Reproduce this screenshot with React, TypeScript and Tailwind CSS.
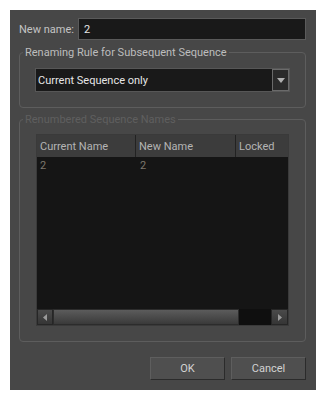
import React from "react";

const font = { fontFamily: 'Roboto, "Liberation Sans", Arial, sans-serif' };

export default function App() {
  return (
    <div className="w-[328px] h-[402px] bg-white pt-[10px] pl-[10px]" style={font}>
      <div className="w-[306px] h-[380px] bg-[#474747] flex flex-col text-[11px] leading-none whitespace-nowrap">
        {/* New name row */}
        <div className="flex items-center mt-[8px] ml-[9px] mr-[10px] h-[22px]">
          <span className="text-[#c4c4c4] w-[59px] shrink-0">New name:</span>
          <div className="flex-1 h-[22px] bg-[#191919] border border-[#5a5a5a] flex items-center pl-[5px] text-[#e6e6e6]">
            2
          </div>
        </div>

        {/* Group 1 */}
        <div className="relative mt-[12px] ml-[9px] mr-[10px] h-[56px] border border-[#5d5d5d] rounded-[4px] px-[15px] pt-[15px]">
          <span className="absolute left-[3px] top-[-7px] bg-[#474747] px-[2px] text-[#bdbdbd] leading-[14px]">
            Renaming Rule for Subsequent Sequence
          </span>
          <div className="flex h-[24px] border border-[#575757] bg-[#191919]">
            <div className="flex-1 flex items-center pl-[2px] text-[#e6e6e6]">Current Sequence only</div>
            <div className="w-[17px] h-full border border-[#6a6a6a] bg-[#2a2a2a] flex items-center justify-center">
              <svg width="8" height="5" viewBox="0 0 8 5">
                <polygon points="0,0 8,0 4,5" fill="#b0b0b0" />
              </svg>
            </div>
          </div>
        </div>

        {/* Group 2 */}
        <div className="relative mt-[11px] ml-[9px] mr-[10px] h-[223px] border border-[#5d5d5d] rounded-[4px] px-[16px] pt-[14px]">
          <span className="absolute left-[3px] top-[-7px] bg-[#474747] px-[2px] text-[#5f5f5f] leading-[14px]">
            Renumbered Sequence Names
          </span>
          <div className="flex flex-col h-[192px] bg-[#151515] border border-[#3a3a3a]">
            <div className="flex h-[22px] bg-[#3c3c3c] text-[#b4b4b4]">
              <div className="w-[99px] flex items-center pl-[3px] border-r border-[#222]">Current Name</div>
              <div className="w-[100px] flex items-center pl-[3px] border-r border-[#222]">New Name</div>
              <div className="flex-1 flex items-center pl-[3px]">Locked</div>
            </div>
            <div className="flex h-[16px] text-[#7e776c] items-center">
              <div className="w-[99px] pl-[3px]">2</div>
              <div className="w-[100px] pl-[4px]">2</div>
            </div>
            <div className="flex-1" />
            <div className="flex h-[16px] bg-[#2a2a2a]">
              <div className="w-[16px] h-full bg-gradient-to-b from-[#4a4a4a] to-[#353535] border border-[#262626] flex items-center justify-center">
                <svg width="4" height="7" viewBox="0 0 4 7">
                  <polygon points="4,0 4,7 0,3.5" fill="#9a9a9a" />
                </svg>
              </div>
              <div className="w-[186px] h-full bg-gradient-to-b from-[#5c5c5c] to-[#3a3a3a] border border-[#2c2c2c]" />
              <div className="flex-1 h-full bg-[#0f0f0f]" />
              <div className="w-[17px] h-full bg-gradient-to-b from-[#4a4a4a] to-[#353535] border border-[#262626] flex items-center justify-center">
                <svg width="4" height="7" viewBox="0 0 4 7">
                  <polygon points="0,0 0,7 4,3.5" fill="#9a9a9a" />
                </svg>
              </div>
            </div>
          </div>
        </div>

        {/* Buttons */}
        <div className="flex justify-end gap-[6px] mt-[15px] mr-[10px]">
          <button className="w-[75px] h-[23px] bg-[#4f4f4f] border border-t-[#5e5e5e] border-l-[#5e5e5e] border-r-[#2b2b2b] border-b-[#2b2b2b] text-[#d2d2d2] text-[11px]">
            OK
          </button>
          <button className="w-[75px] h-[23px] bg-[#4f4f4f] border border-t-[#5e5e5e] border-l-[#5e5e5e] border-r-[#2b2b2b] border-b-[#2b2b2b] text-[#d2d2d2] text-[11px]">
            Cancel
          </button>
        </div>
      </div>
    </div>
  );
}
